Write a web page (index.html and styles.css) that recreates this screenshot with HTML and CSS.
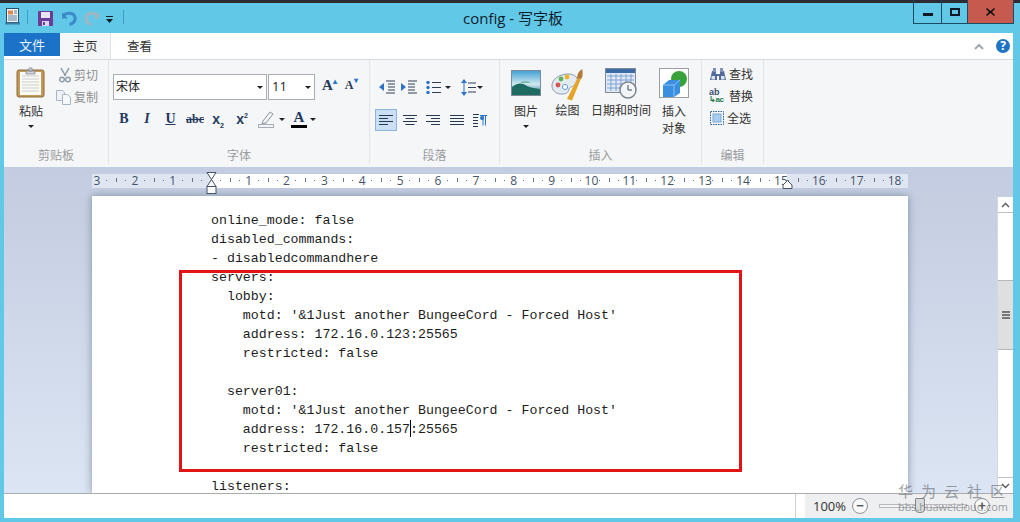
FILE: index.html
```html
<!DOCTYPE html>
<html lang="zh">
<head>
<meta charset="utf-8">
<title>config - 写字板</title>
<link rel="stylesheet" href="styles.css">
</head>
<body>
<div class="topstrip"></div>
<header class="titlebar">
  <div class="qat">
    <svg class="q-app" width="15" height="17" viewBox="0 0 15 17"><rect x="1.500" y=".5" width="12" height="14" fill="#f2f5f8" stroke="#27506f"/><rect x="3" y="2.500" width="5" height="4" fill="#e08a4a"/><path d="M9 3h3M9 5h3M3 8h9M3 10h9M3 12h9" stroke="#5a7f9c"/><path d="M0 14.500h15v2H0z" fill="#3c7ea8"/></svg>
    <i class="q-sep"></i>
    <svg class="q-save" width="15" height="15" viewBox="0 0 15 15"><rect width="15" height="15" rx="1" fill="#6b3d9b"/><rect x="3" y="1" width="9" height="6" fill="#e9e6f4"/><rect x="4" y="10" width="7" height="5" fill="#d9d4ea"/><rect x="5" y="11" width="2" height="3" fill="#6b3d9b"/></svg>
    <svg class="q-undo" width="15" height="15" viewBox="0 0 15 15"><path d="M1 4.500c4-3.500 11-3 12 2 .6 3.500-2 6-5.500 7" fill="none" stroke="#3b8ac9" stroke-width="3"/><path d="M0 1.500v6h6z" fill="#3b8ac9"/></svg>
    <svg class="q-redo" width="15" height="15" viewBox="0 0 15 15"><path d="M14 4.500c-4-3.500-11-3-12 2-.6 3.500 2 6 5.500 7" fill="none" stroke="#9fb6c4" stroke-width="3"/><path d="M15 1.500v6H9z" fill="#9fb6c4"/></svg>
    <svg class="q-drop" width="9" height="8" viewBox="0 0 9 8"><path d="M1 0h7v1H1zM1 3h7L4.500 7z" fill="#14202a"/></svg>
    <i class="q-sep q-sep2"></i>
  </div>
  <h1 class="doc-title">config - 写字板</h1>
  <div class="wincontrols">
    <button class="wc wc-min"><i></i></button>
    <button class="wc wc-max"><i></i></button>
    <button class="wc wc-close"><svg width="9" height="8" viewBox="0 0 9 8"><path d="M1 0l3.500 3L8 0l1 1-3 3 3 3-1 1-3.500-3L1 8 0 7l3-3-3-3z" fill="#111"/></svg></button>
  </div>
</header>

<div class="window">
  <nav class="tabs">
    <span class="tab tab-file">文件</span>
    <span class="tab tab-home">主页</span>
    <span class="tab tab-view">查看</span>
    <span class="tabs-right">
      <svg width="10" height="7" viewBox="0 0 10 7"><path d="M1 6l4-4 4 4" fill="none" stroke="#a3a8ae" stroke-width="2"/></svg>
      <span class="help">?</span>
    </span>
  </nav>

  <section class="ribbon">
    <div class="group g-clip">
      <div class="g-body clip-body">
        <div class="big big-paste">
          <svg width="30" height="31" viewBox="0 0 30 31"><rect x="1" y="3" width="27" height="27" rx="2" fill="#c19a5b" stroke="#8c6a36"/><rect x="4" y="5" width="21" height="23" fill="#fbfbf4"/><path d="M6 9h17M6 12h17M6 15h17M6 18h17M6 21h17M6 24h17" stroke="#c9cdd3"/><path d="M10 4h9v3h-9zM13 1h3v3h-3z" fill="#cfd3d8" stroke="#858b92" stroke-width=".8"/></svg>
          <span class="big-label">粘贴</span>
          <i class="caret"></i>
        </div>
        <div class="small-col clip-small">
          <span class="small-item muted"><svg width="12" height="15" viewBox="0 0 12 15"><path d="M2 0l4.500 8M10 0L5.500 8" stroke="#8d9aa8" stroke-width="1.500"/><circle cx="3" cy="11.500" r="2.300" fill="none" stroke="#8d9aa8" stroke-width="1.400"/><circle cx="9" cy="11.500" r="2.300" fill="none" stroke="#8d9aa8" stroke-width="1.400"/></svg>剪切</span>
          <span class="small-item muted"><svg width="15" height="15" viewBox="0 0 15 15"><path d="M.5.500h6l2 2v8h-8z" fill="#eef2f6" stroke="#a9b5c2"/><path d="M6.500 4.500h5l3 3v7h-8z" fill="#f6f8fa" stroke="#a9b5c2"/></svg>复制</span>
        </div>
      </div>
      <div class="g-label">剪贴板</div>
    </div>

    <div class="group g-font">
      <div class="g-body font-body">
        <div class="font-row1">
          <div class="combo combo-font"><span>宋体</span><i class="caret"></i></div>
          <div class="combo combo-size"><span>11</span><i class="caret"></i></div>
          <span class="grow-a">A<sup>▴</sup></span>
          <span class="shrink-a">A<sup>▾</sup></span>
        </div>
        <div class="font-row2">
          <b class="fmt f-b">B</b>
          <i class="fmt f-i">I</i>
          <u class="fmt f-u">U</u>
          <s class="fmt f-s">abc</s>
          <span class="fmt f-x">x<sub>2</sub></span>
          <span class="fmt f-x2">x<sup>2</sup></span>
          <svg class="f-pen" width="17" height="17" viewBox="0 0 17 17"><path d="M5 10l7-9 3 2-7 9-4 1z" fill="#f3f4f6" stroke="#8b95a1"/><rect x=".5" y="13.500" width="15" height="3" fill="#f3f4f6" stroke="#a5acb5"/></svg>
          <i class="caret f-caret1"></i>
          <span class="f-color">A</span>
          <i class="caret f-caret2"></i>
        </div>
      </div>
      <div class="g-label">字体</div>
    </div>

    <div class="group g-para">
      <div class="g-body para-body">
        <div class="para-row1">
          <svg width="17" height="15" viewBox="0 0 17 15"><path d="M7 1h9M9 4h7M9 7h7M9 10h7M7 13h9" stroke="#2f3f56"/><path d="M0 7l5-4v8z" fill="#2a73c8"/></svg>
          <svg width="17" height="15" viewBox="0 0 17 15"><path d="M1 1h9M1 4h7M1 7h7M1 10h7M1 13h9" stroke="#2f3f56" transform="translate(6)"/><path d="M5 7L0 3v8z" fill="#2a73c8"/></svg>
          <svg class="p-list" width="15" height="13" viewBox="0 0 15 13"><path d="M6 1.500h9M6 6.500h9M6 11.500h9" stroke="#2f3f56"/><circle cx="2" cy="1.500" r="1.700" fill="#2a73c8"/><circle cx="2" cy="6.500" r="1.700" fill="#2a73c8"/><circle cx="2" cy="11.500" r="1.700" fill="#2a73c8"/></svg>
          <i class="caret"></i>
          <svg class="p-space" width="15" height="17" viewBox="0 0 15 17"><path d="M7 4h8M7 8.500h8M7 13h8" stroke="#2f3f56"/><path d="M3 0l3 4H0zM3 17l3-4H0z" fill="#2a73c8"/><path d="M3 4v9" stroke="#2a73c8"/></svg>
          <i class="caret"></i>
        </div>
        <div class="para-row2">
          <span class="align on"><svg width="14" height="11" viewBox="0 0 14 11"><path d="M0 .500h14M0 3.500h9M0 6.500h14M0 9.500h9" stroke="#27374d"/></svg></span>
          <span class="align"><svg width="14" height="11" viewBox="0 0 14 11"><path d="M0 .500h14M2.500 3.500h9M0 6.500h14M2.500 9.500h9" stroke="#27374d"/></svg></span>
          <span class="align"><svg width="14" height="11" viewBox="0 0 14 11"><path d="M0 .500h14M5 3.500h9M0 6.500h14M5 9.500h9" stroke="#27374d"/></svg></span>
          <span class="align"><svg width="14" height="11" viewBox="0 0 14 11"><path d="M0 .500h14M0 3.500h14M0 6.500h14M0 9.500h14" stroke="#27374d"/></svg></span>
          <span class="align"><svg width="14" height="13" viewBox="0 0 14 13"><path d="M0 .500h6M0 3.500h5M0 6.500h5M0 9.500h5M0 12.500h5" stroke="#27374d"/><path d="M7 1.500h7M10 1.500v10M12.500 1.500v10" stroke="#2a73c8"/><circle cx="9" cy="4" r="2" fill="#2a73c8"/></svg></span>
        </div>
      </div>
      <div class="g-label">段落</div>
    </div>

    <div class="group g-insert">
      <div class="g-body insert-body">
        <div class="big big-pic">
          <svg width="30" height="26" viewBox="0 0 30 26"><defs><linearGradient id="sky" x1="0" y1="0" x2="0" y2="1"><stop offset="0" stop-color="#3f9fd6"/><stop offset=".55" stop-color="#cfe9ee"/><stop offset="1" stop-color="#1f6f90"/></linearGradient></defs><rect x=".5" y=".5" width="29" height="25" fill="url(#sky)" stroke="#7e8b96"/><path d="M1 17c6-5 11-4 15-1 4 2 9 2 13 3v6H1z" fill="#1e6b62"/><path d="M10 12c4-2 7-1 10 1H10z" fill="#7fb8a8"/></svg>
          <span class="big-label">图片</span>
          <i class="caret"></i>
        </div>
        <div class="big big-paint">
          <svg width="33" height="33" viewBox="0 0 33 33"><path d="M1 19C0 11 9 6 17 6c7 0 11 4 9 9-2 4-7 3-8 6-1 4-3 5-7 5-5 0-9-2-10-7z" fill="#e3eaf2" stroke="#8b9bad"/><circle cx="7" cy="17" r="2.400" fill="#d9534f"/><circle cx="10" cy="11" r="2.400" fill="#5fb25c"/><circle cx="16" cy="9" r="2.400" fill="#f0b429"/><circle cx="14" cy="19" r="2.600" fill="#fff" stroke="#5aa0d8"/><path d="M16 31L27 9l3 1.500-9 22z" fill="#e6a326"/><path d="M26 10c0-4 2-7 5-9 1 3 1 8-1 10z" fill="#b47a3c"/></svg>
          <span class="big-label">绘图</span>
        </div>
        <div class="big big-date">
          <svg width="32" height="31" viewBox="0 0 32 31"><rect x=".5" y=".5" width="30" height="24" fill="#dfe8f4" stroke="#7f8b98"/><rect x="1" y="1" width="29" height="4" fill="#3b6aa8"/><path d="M2 8h27M2 12h27M2 16h27M2 20h27M6 6v17M11 6v17M16 6v17M21 6v17M26 6v17" stroke="#7fa3d2"/><circle cx="23" cy="22" r="8" fill="#f4f5f6" stroke="#7d868f" stroke-width="1.500"/><path d="M23 17v5h4" fill="none" stroke="#3b4a5c"/></svg>
          <span class="big-label">日期和时间</span>
        </div>
        <div class="big big-obj">
          <svg width="30" height="30" viewBox="0 0 30 30"><rect x=".5" y=".5" width="29" height="29" fill="#fff" stroke="#9aa0a6"/><circle cx="20" cy="11" r="8" fill="#3aa23a"/><path d="M4 17l6-5h11v13l-6 4H4z" fill="#3b8fe0"/><path d="M4 17h11v12M15 17l6-5" fill="none" stroke="#8cc2f2"/></svg>
          <span class="big-label">插入<br>对象</span>
        </div>
      </div>
      <div class="g-label">插入</div>
    </div>

    <div class="group g-edit">
      <div class="g-body small-col edit-body">
        <span class="small-item"><svg width="16" height="13" viewBox="0 0 16 13"><path d="M2 3h4v3h4V3h4l2 9H9V8H7v4H0z" fill="#54699a"/><rect x="3" y="0" width="3" height="4" fill="#7f93bd"/><rect x="10" y="0" width="3" height="4" fill="#7f93bd"/><rect x="1.500" y="8" width="3.500" height="3.500" fill="#dbe3f0"/><rect x="11" y="8" width="3.500" height="3.500" fill="#dbe3f0"/></svg>查找</span>
        <span class="small-item"><span class="ab-ac"><em>ab</em><strong>↳ac</strong></span>替换</span>
        <span class="small-item"><svg width="14" height="14" viewBox="0 0 14 14"><rect x=".5" y=".5" width="13" height="13" fill="none" stroke="#2a5f9e" stroke-dasharray="1.500 1"/><rect x="3" y="3" width="8" height="8" fill="#a9cdf0" stroke="#7ea7cf"/></svg>全选</span>
      </div>
      <div class="g-label">编辑</div>
    </div>
  </section>

  <main class="docarea">
    <div class="canvas">
      <div class="ruler">
        <span class="rc">3</span><span class="rc">2</span><span class="rc">1</span><span class="rc"></span><span class="rc">1</span><span class="rc">2</span><span class="rc">3</span><span class="rc">4</span><span class="rc">5</span><span class="rc">6</span><span class="rc">7</span><span class="rc">8</span><span class="rc">9</span><span class="rc">10</span><span class="rc">11</span><span class="rc">12</span><span class="rc">13</span><span class="rc">14</span><span class="rc">15</span><span class="rc">16</span><span class="rc">17</span><span class="rc">18</span>
        <svg class="indent-l" width="11" height="22" viewBox="0 0 11 22"><path d="M1 .500h9L5.500 7.500zM5.500 7.500L1 14.500h9z" fill="#fff" stroke="#44546a"/><rect x="1" y="14.500" width="9" height="7" fill="#fff" stroke="#44546a"/></svg>
        <svg class="indent-r" width="11" height="9" viewBox="0 0 11 9"><path d="M5.500.500L10 5v3.500H1V5z" fill="#fff" stroke="#44546a"/></svg>
      </div>
      <article class="page">
<pre class="doc">online_mode: false
disabled_commands:
- disabledcommandhere
servers:
  lobby:
    motd: '&amp;1Just another BungeeCord - Forced Host'
    address: 172.16.0.123:25565
    restricted: false

  server01:
    motd: '&amp;1Just another BungeeCord - Forced Host'
    address: 172.16.0.157<span class="cursor"></span>:25565
    restricted: false

listeners:</pre>
      </article>
    </div>
    <aside class="scrollbar">
      <span class="sb-btn"><svg width="9" height="6" viewBox="0 0 9 6"><path d="M1 5l3.500-3.500L8 5" fill="none" stroke="#555" stroke-width="1.300"/></svg></span>
      <span class="sb-thumb"><i></i></span>
      <span class="sb-btn sb-down"><svg width="9" height="6" viewBox="0 0 9 6"><path d="M1 1l3.500 3.500L8 1" fill="none" stroke="#555" stroke-width="1.300"/></svg></span>
    </aside>
  </main>

  <footer class="status">
    <div class="status-zoom">
      <span class="zoom-pct">100%</span>
      <span class="zoom-btn">−</span>
      <span class="zoom-track"><i class="zoom-thumb"></i></span>
      <span class="zoom-btn zoom-plus">+</span>
    </div>
  </footer>
</div>

<div class="redbox"></div>
<div class="watermark"><div class="wm-cn">华为云社区</div><div class="wm-en">bbs.huaweicloud.com</div></div>
</body>
</html>
```
FILE: styles.css
```css
* { box-sizing: border-box; }
html, body { margin: 0; padding: 0; }
body {
  width: 1020px; height: 522px; overflow: hidden; position: relative;
  background: #62c8e8;
  font-family: "Noto Sans CJK SC", "Noto Sans", sans-serif;
  font-size: 12px; color: #3b3b3b;
  display: flex; flex-direction: column;
}
.topstrip { height: 3px; background: #2c2c34; flex: none; }

.titlebar { height: 30px; flex: none; position: relative; display: flex; justify-content: center; }
.qat { position: absolute; left: 5px; top: 0; display: flex; align-items: flex-start; }
.qat svg { display: block; }
.q-app { margin-top: 5px; }
.q-sep { width: 1px; height: 14px; background: #3f9cbc; margin: 7px 0 0 7px; }
.q-save { margin: 8px 0 0 10px; }
.q-undo { margin: 8px 0 0 9px; }
.q-redo { margin: 8px 0 0 7px; }
.q-drop { margin: 13px 0 0 6px; }
.q-sep2 { margin-left: 9px; }
.doc-title { margin: 0; font: 400 15px/30px "Open Sans", "Noto Sans CJK SC", sans-serif; color: #10202c; padding-left: 6px; }
.wincontrols { position: absolute; right: 6px; top: -3px; display: flex; height: 24px; border: 1px solid #1b4a63; border-top: none; }
.wc { border: 0; padding: 0; background: transparent; display: flex; align-items: center; justify-content: center; height: 23px; }
.wc-min { width: 28px; border-right: 1px solid #1b4a63; }
.wc-min i { width: 10px; height: 3px; background: #0b1a24; margin-top: 5px; }
.wc-max { width: 26px; border-right: 1px solid #1b4a63; }
.wc-max i { width: 10px; height: 8px; border: 2px solid #0b1a24; }
.wc-close { width: 45px; background: #c75a4e; }

.window { flex: none; margin: 0 7px 0 4px; height: 485px; display: flex; flex-direction: column; }
.tabs { height: 27px; flex: none; background: #fff; border-bottom: 1px solid #d9dadb; display: flex; }
.tab { display: flex; align-items: center; justify-content: center; height: 26px; font-size: 12.500px; padding-bottom: 2px; }
.tab-file { width: 56px; height: 23px; background: #1b72c6; color: #e8f2fb; font-size: 13px; padding-bottom: 1px; }
.tab-home { width: 51px; background: #f5f6f7; border-right: 1px solid #dfe1e3; color: #333; }
.tab-view { margin-left: 16px; color: #333; }
.tabs-right { margin-left: auto; display: flex; align-items: center; gap: 12px; padding-right: 3px; height: 26px; }
.help { width: 14px; height: 14px; border-radius: 50%; background: #1f75c4; color: #fff; font: 700 12px/14px "Open Sans", sans-serif; text-align: center; }

.ribbon { height: 107px; flex: none; background: #f5f6f7; display: flex; }
.group { border-right: 1px solid #e2e4e7; display: flex; flex-direction: column; height: 104px; flex: none; }
.g-body { height: 86px; flex: none; }
.g-label { text-align: center; color: #9a9c9f; font-size: 12px; line-height: 16px; margin-top: 1px; }
.g-clip { width: 105px; }
.g-font { width: 261px; }
.g-para { width: 130px; }
.g-insert { width: 202px; }
.g-edit { width: 62px; }

.caret { width: 0; height: 0; border: 3px solid transparent; border-top: 3.500px solid #222; border-bottom: 0; display: block; flex: none; }
.big { display: flex; flex-direction: column; align-items: center; flex: none; }
.big svg { display: block; flex: none; }
.big-label { line-height: 17px; color: #333; text-align: center; }

.clip-body { display: flex; }
.big-paste { width: 32px; margin: 7px 0 0 11px; }
.big-paste .big-label { margin-top: 4px; }
.big-paste .caret { margin-top: 6px; }
.small-col { display: flex; flex-direction: column; }
.clip-small { margin: 7px 0 0 10px; gap: 6px; }
.small-item { display: flex; align-items: center; height: 16px; white-space: nowrap; line-height: 16px; color: #333; }
.small-item svg { flex: none; }
.muted { color: #8e8f91; }
.clip-small .small-item svg { margin-right: 3px; }
.clip-small .small-item:first-child svg { margin: 0 3px 0 2px; }
.clip-small .small-item:last-child { margin-left: -1px; }

.font-body { padding: 14px 0 0 4px; }
.font-row1 { display: flex; align-items: flex-start; }
.combo { height: 26px; border: 1px solid #abadb3; background: #fff; display: flex; align-items: center; justify-content: space-between; padding: 0 3px 3px 2px; color: #222; }
.combo .caret { margin-top: 3px; }
.combo-font { width: 154px; }
.combo-size { width: 47px; margin-left: 1px; padding-left: 3px; font: 13px "Open Sans", sans-serif; }
.grow-a, .shrink-a { font: 700 14px/20px "Liberation Serif", serif; color: #243a5e; display: block; margin-top: 1px; }
.grow-a { margin-left: 7px; font-size: 15px; }
.shrink-a { margin-left: 8px; font-size: 12px; }
.grow-a sup, .shrink-a sup { font-size: 8px; color: #2a73c8; vertical-align: 6px; line-height: 0; }
.font-row2 { display: flex; align-items: center; height: 20px; margin-top: 9px; position: relative; font-family: "Liberation Serif", serif; color: #243a5e; font-size: 14px; padding-left: 6px; }
.fmt { display: block; text-align: center; font-weight: 700; }
.f-b { width: 10px; }
.f-i { width: 10px; margin-left: 13px; }
.f-u { width: 11px; margin-left: 13px; }
.f-s { width: 18px; margin-left: 10px; font-size: 12px; }
.f-x { width: 14px; margin-left: 7px; font-family: "Liberation Sans", sans-serif; }
.f-x2 { width: 14px; margin-left: 10px; font-family: "Liberation Sans", sans-serif; }
.f-x sub, .f-x2 sup { font-size: 7px; line-height: 0; }
.f-pen { margin-left: 9px; flex: none; }
.f-caret1 { margin-left: 4px; }
.f-color { margin-left: 6px; width: 16px; text-align: center; font: 700 15px/15px "Liberation Serif", serif; border-bottom: 3px solid #000; }
.f-caret2 { margin-left: 3px; }

.para-body { padding: 18px 0 0 9px; }
.para-row1 { display: flex; align-items: center; height: 18px; }
.para-row1 svg { display: block; flex: none; }
.para-row1 svg:nth-child(2) { margin-left: 5px; }
.p-list { margin-left: 8px; }
.para-row1 .caret { margin-left: 4px; }
.p-space { margin-left: 10px; }
.para-row1 .p-space + .caret { margin-left: 1px; }
.para-row2 { display: flex; margin: 13px 0 0 -4px; align-items: center; }
.align { width: 22px; height: 22px; display: flex; align-items: center; justify-content: center; border: 1px solid transparent; flex: none; }
.align.on { background: #c9dff5; border-color: #8fb5de; }
.align svg { display: block; }
.align:nth-child(n+2) { margin-left: 1.500px; }

.insert-body { display: flex; align-items: flex-start; }
.big-pic { width: 30px; margin: 10px 0 0 11px; }
.big-pic .big-label { margin-top: 6px; }
.big-pic .caret { margin-top: 6px; }
.big-paint { width: 33px; margin: 8px 0 0 10px; }
.big-date { width: 62px; margin: 8px 0 0 6px; }
.big-date .big-label { margin-top: 2px; white-space: nowrap; }
.big-obj { width: 30px; margin: 8px 0 0 7px; }
.big-obj .big-label { margin-top: 4px; }

.edit-body { padding: 6px 0 0 6px; gap: 6px; }
.edit-body .small-item svg { margin-right: 3px; margin-left: 1px; }
.edit-body .small-item { padding-left: 1px; }
.ab-ac { width: 17px; margin: 0 3px 0 0; font: 700 8px/8px "Liberation Sans", sans-serif; display: block; color: #2a5f9e; }
.ab-ac em { font-style: normal; display: block; color: #3b4f72; font-size: 9px; }
.ab-ac strong { display: block; color: #1e7a4b; white-space: nowrap; letter-spacing: -.5px; }

.docarea { flex: none; height: 326px; display: flex; background: linear-gradient(#c3cce0, #dbe5f3); }
.canvas { flex: 1; display: flex; flex-direction: column; overflow: hidden; padding: 7px 0 0 88px; }
.ruler {
  width: 816px; height: 14px; flex: none; display: flex; position: relative;
  background: linear-gradient(90deg, #dfe6f1 119px, #fff 119px, #fff 695px, #dfe6f1 695px);
}
.rc {
  width: 37.900px; flex: none; font: 12px/13px "Open Sans", sans-serif; color: #44546a; text-align: center;
  display: block; padding-right: 27.900px; white-space: nowrap;
  background:
    linear-gradient(#66758a, #66758a) 14px 6px / 1px 1px no-repeat,
    linear-gradient(#66758a, #66758a) 24px 4px / 1px 4px no-repeat,
    linear-gradient(#66758a, #66758a) 33px 6px / 1px 1px no-repeat;
}
.rc:last-of-type { width: 19px; background-size: 1px 1px, 0 0, 0 0; }
.indent-l { position: absolute; left: 114px; top: -2px; }
.indent-r { position: absolute; left: 690px; top: 6px; }

.page { width: 816px; flex: 1; margin-top: 8px; background: #fff; overflow: hidden; padding: 15px 0 0 119px; box-shadow: 0 0 8px rgba(70,85,115,.55); }
.doc { margin: 0; font: 13.270px/19px "Liberation Mono", "Noto Sans CJK SC", monospace; color: #1c1c1c; }
.cursor { display: inline-block; width: 1px; height: 17px; background: #000; vertical-align: -4px; margin-right: -1px; }

.scrollbar { width: 16px; flex: none; margin-top: 30px; background: #fff; border-left: 1px solid #d5d7da; display: flex; flex-direction: column; }
.sb-btn { height: 16px; flex: none; display: flex; align-items: center; justify-content: center; border-bottom: 1px solid #bfc1c4; }
.sb-thumb { height: 70px; flex: none; margin-top: 67px; background: #dedfe1; border: 1px solid #b5b7ba; border-width: 1px 0; display: flex; align-items: center; justify-content: center; }
.sb-thumb i { width: 8px; height: 8px; border-top: 2px solid #777; border-bottom: 2px solid #777; background: linear-gradient(#777,#777) 0 1px / 8px 2px no-repeat; }
.sb-down { margin-top: auto; border-bottom: 0; border-top: 1px solid #bfc1c4; }

.status { height: 25px; flex: none; background: #fff; border-top: 1px solid #a9abae; display: flex; justify-content: flex-end; }
.status-zoom { width: 218px; border-left: 1px solid #d0d2d5; display: flex; align-items: center; padding-left: 9px; background: linear-gradient(90deg, #fff 9px, #eeeff0 9px); }
.zoom-pct { font: 13px "Open Sans", sans-serif; color: #333; width: 33px; margin-left: 8px; }
.zoom-btn { width: 16px; height: 16px; border: 1px solid #8f9398; border-radius: 50%; margin-left: 6px; font: 700 13px/13px "Liberation Sans", sans-serif; text-align: center; color: #555; background: #f8f8f8; flex: none; }
.zoom-track { width: 88px; height: 4px; margin-left: 11px; border: 1px solid #b8babd; background: #f5f5f5; position: relative; flex: none; }
.zoom-thumb { position: absolute; left: 35px; top: -7px; width: 10px; height: 15px; background: #d9dadc; border: 1px solid #888; border-radius: 1px 1px 4px 4px; }
.zoom-plus { margin-left: 7px; }

.redbox { position: absolute; left: 179px; top: 270px; width: 563px; height: 202px; border: 3px solid #e01414; pointer-events: none; }
.watermark { position: absolute; left: 898px; top: 482px; width: 110px; color: rgba(95,100,105,.62); pointer-events: none; }
.wm-cn { font-size: 15px; line-height: 18px; letter-spacing: 8px; white-space: nowrap; }
.wm-en { font: 11px/14px "Open Sans", sans-serif; white-space: nowrap; letter-spacing: -.1px; }
```
